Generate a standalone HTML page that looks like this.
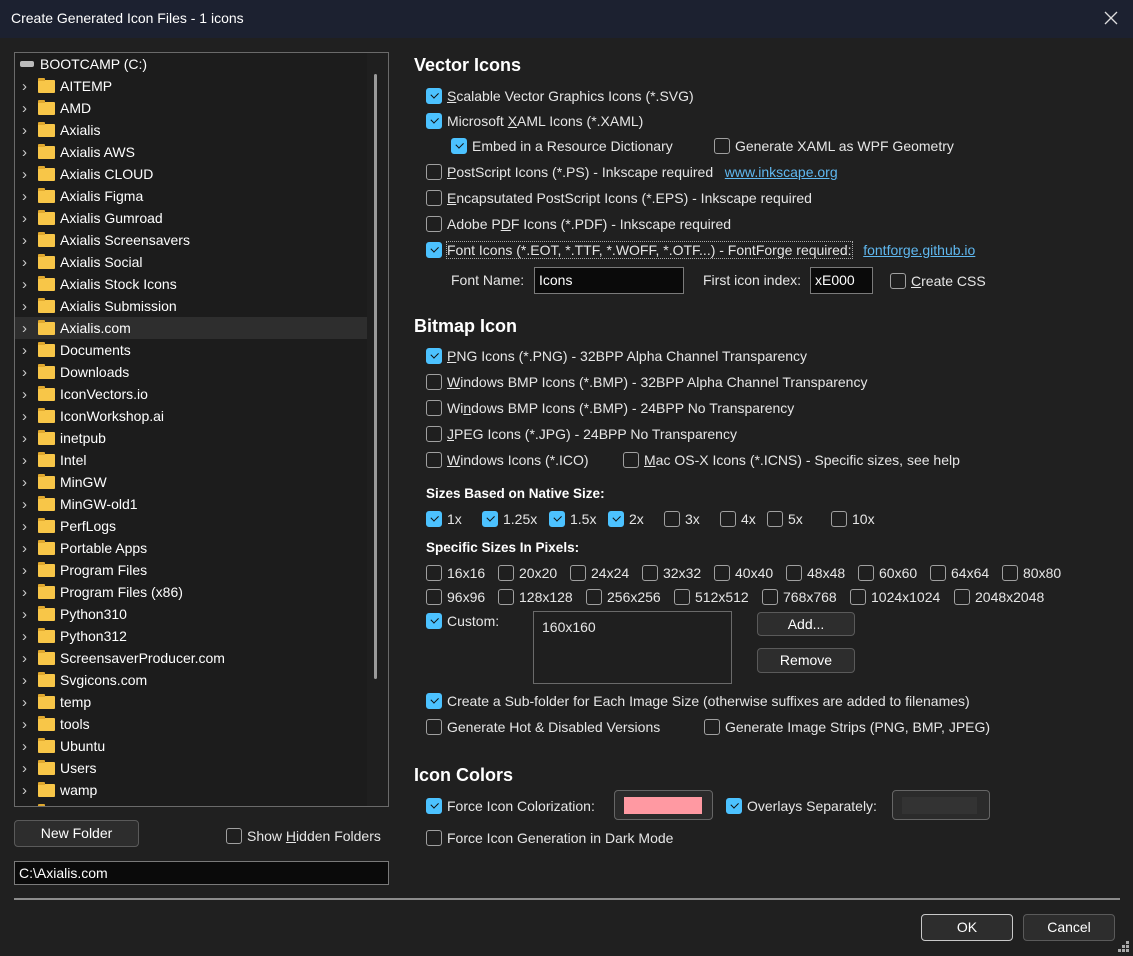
<!DOCTYPE html>
<html><head><meta charset="utf-8"><style>
*{box-sizing:border-box;margin:0;padding:0}
body{width:1133px;height:956px;background:#202020;font-family:"Liberation Sans",sans-serif;font-size:14px;color:#e6e6e6;position:relative;overflow:hidden}
.a{position:absolute;white-space:nowrap}
.title{left:0;top:0;width:1133px;height:38px;background:#1c2130}
.it{display:flex;align-items:center;height:18px;line-height:18px}
.cb{width:16px;height:16px;border:1px solid #a0a0a0;border-radius:3px;margin-right:5px;flex:none;position:relative;background:#1f1f1f}
.cb.c{background:#4cc2ff;border-color:#4cc2ff}
.cb.c:after{content:"";position:absolute;left:4px;top:3px;width:6px;height:3.5px;border-left:1.5px solid #111;border-bottom:1.5px solid #111;transform:rotate(-45deg)}
h2{position:absolute;font-size:18px;font-weight:bold;color:#fff}
.b{font-weight:bold;font-size:13.5px;color:#fff}
.btn{position:absolute;background:#2d2d2d;border:1px solid #5a5a5a;border-radius:4px;text-align:center;color:#fff;font-size:14px}
.inp{position:absolute;background:#0a0a0a;border:1px solid #7a7a7a;color:#fff;padding-left:4px;font-size:14px}
.tree{left:14px;top:52px;width:375px;height:755px;background:#1c1c1c;border:1px solid #6a6a6a;overflow:hidden}
.row{position:absolute;left:0;height:22px;width:352px;display:flex;align-items:center;font-size:14px;color:#fff}
.row .ch{width:23px;padding-left:7px;color:#ccc;font-size:15px;line-height:15px}
.fd{width:17px;height:13px;background:#f8c648;border-radius:1px;margin:0 5px 0 0;position:relative}
.fd:before{content:"";position:absolute;left:0;top:-2px;width:7px;height:3px;background:#e0a82e;border-radius:1px 1px 0 0}
u{text-decoration:underline}
a{color:#5fb8f0;text-decoration:underline}
</style></head><body>
<div class="a title"></div>
<div class="a" style="left:11px;top:10px;font-size:14px;color:#fff">Create Generated Icon Files - 1 icons</div>
<svg class="a" style="left:1104px;top:11px" width="14" height="14"><path d="M1 1L13 13M13 1L1 13" stroke="#ddd" stroke-width="1.3"/></svg>

<div class="a tree">
<div class="a" style="left:352px;top:0;width:21px;height:753px;background:#1f1f1f"></div>
<div class="a" style="left:359px;top:21px;width:3px;height:605px;background:#9a9a9a;border-radius:2px"></div>
<div class="row" style="top:0"><span style="width:5px"></span><span style="width:14px;height:6px;background:#bbb;border-radius:2px;margin-right:6px"></span>BOOTCAMP (C:)</div>
<div class="row" style="top:22px"><span class="ch">&#x203A;</span><span class="fd"></span>AITEMP</div>
<div class="row" style="top:44px"><span class="ch">&#x203A;</span><span class="fd"></span>AMD</div>
<div class="row" style="top:66px"><span class="ch">&#x203A;</span><span class="fd"></span>Axialis</div>
<div class="row" style="top:88px"><span class="ch">&#x203A;</span><span class="fd"></span>Axialis AWS</div>
<div class="row" style="top:110px"><span class="ch">&#x203A;</span><span class="fd"></span>Axialis CLOUD</div>
<div class="row" style="top:132px"><span class="ch">&#x203A;</span><span class="fd"></span>Axialis Figma</div>
<div class="row" style="top:154px"><span class="ch">&#x203A;</span><span class="fd"></span>Axialis Gumroad</div>
<div class="row" style="top:176px"><span class="ch">&#x203A;</span><span class="fd"></span>Axialis Screensavers</div>
<div class="row" style="top:198px"><span class="ch">&#x203A;</span><span class="fd"></span>Axialis Social</div>
<div class="row" style="top:220px"><span class="ch">&#x203A;</span><span class="fd"></span>Axialis Stock Icons</div>
<div class="row" style="top:242px"><span class="ch">&#x203A;</span><span class="fd"></span>Axialis Submission</div>
<div class="row" style="top:264px;background:#2e2e2e"><span class="ch">&#x203A;</span><span class="fd"></span>Axialis.com</div>
<div class="row" style="top:286px"><span class="ch">&#x203A;</span><span class="fd"></span>Documents</div>
<div class="row" style="top:308px"><span class="ch">&#x203A;</span><span class="fd"></span>Downloads</div>
<div class="row" style="top:330px"><span class="ch">&#x203A;</span><span class="fd"></span>IconVectors.io</div>
<div class="row" style="top:352px"><span class="ch">&#x203A;</span><span class="fd"></span>IconWorkshop.ai</div>
<div class="row" style="top:374px"><span class="ch">&#x203A;</span><span class="fd"></span>inetpub</div>
<div class="row" style="top:396px"><span class="ch">&#x203A;</span><span class="fd"></span>Intel</div>
<div class="row" style="top:418px"><span class="ch">&#x203A;</span><span class="fd"></span>MinGW</div>
<div class="row" style="top:440px"><span class="ch">&#x203A;</span><span class="fd"></span>MinGW-old1</div>
<div class="row" style="top:462px"><span class="ch">&#x203A;</span><span class="fd"></span>PerfLogs</div>
<div class="row" style="top:484px"><span class="ch">&#x203A;</span><span class="fd"></span>Portable Apps</div>
<div class="row" style="top:506px"><span class="ch">&#x203A;</span><span class="fd"></span>Program Files</div>
<div class="row" style="top:528px"><span class="ch">&#x203A;</span><span class="fd"></span>Program Files (x86)</div>
<div class="row" style="top:550px"><span class="ch">&#x203A;</span><span class="fd"></span>Python310</div>
<div class="row" style="top:572px"><span class="ch">&#x203A;</span><span class="fd"></span>Python312</div>
<div class="row" style="top:594px"><span class="ch">&#x203A;</span><span class="fd"></span>ScreensaverProducer.com</div>
<div class="row" style="top:616px"><span class="ch">&#x203A;</span><span class="fd"></span>Svgicons.com</div>
<div class="row" style="top:638px"><span class="ch">&#x203A;</span><span class="fd"></span>temp</div>
<div class="row" style="top:660px"><span class="ch">&#x203A;</span><span class="fd"></span>tools</div>
<div class="row" style="top:682px"><span class="ch">&#x203A;</span><span class="fd"></span>Ubuntu</div>
<div class="row" style="top:704px"><span class="ch">&#x203A;</span><span class="fd"></span>Users</div>
<div class="row" style="top:726px"><span class="ch">&#x203A;</span><span class="fd"></span>wamp</div>
<div class="row" style="top:748px"><span class="ch"></span><span class="fd"></span>x</div>
</div>

<div class="btn" style="left:14px;top:820px;width:125px;height:27px;line-height:25px">New Folder</div>
<div class="a it" style="left:226px;top:827px"><span class="cb"></span><span>Show <u>H</u>idden Folders</span></div>
<div class="inp" style="left:14px;top:861px;width:375px;height:24px;line-height:22px">C:\Axialis.com</div>

<h2 style="left:414px;top:55px">Vector Icons</h2>
<div class="a it" style="left:426px;top:87px"><span class="cb c"></span><span><u>S</u>calable Vector Graphics Icons (*.SVG)</span></div>
<div class="a it" style="left:426px;top:112px"><span class="cb c"></span><span>Microsoft <u>X</u>AML Icons (*.XAML)</span></div>
<div class="a it" style="left:451px;top:137px"><span class="cb c"></span><span>Embed in a Resource Dictionary</span></div>
<div class="a it" style="left:714px;top:137px"><span class="cb"></span><span>Generate XAML as WPF Geometry</span></div>
<div class="a it" style="left:426px;top:163px"><span class="cb"></span><span><u>P</u>ostScript Icons (*.PS) - Inkscape required&nbsp;&nbsp;&nbsp;<a>www.inkscape.org</a></span></div>
<div class="a it" style="left:426px;top:189px"><span class="cb"></span><span><u>E</u>ncapsutated PostScript Icons (*.EPS) - Inkscape required</span></div>
<div class="a it" style="left:426px;top:215px"><span class="cb"></span><span>Adobe P<u>D</u>F Icons (*.PDF) - Inkscape required</span></div>
<div class="a it" style="left:426px;top:241px"><span class="cb c"></span><span><span style="outline:1px dotted #aaa">Font Icons (*.EOT, *.TTF, *.WOFF, *.OTF...) - FontForge required:</span>&nbsp;&nbsp;&nbsp;<a>fontforge.github.io</a></span></div>
<div class="a" style="left:451px;top:272px;font-size:14px">Font Name:</div>
<div class="inp" style="left:534px;top:267px;width:150px;height:27px;line-height:25px">Icons</div>
<div class="a" style="left:703px;top:272px;font-size:14px">First icon index:</div>
<div class="inp" style="left:810px;top:267px;width:63px;height:27px;line-height:25px">xE000</div>
<div class="a it" style="left:890px;top:272px"><span class="cb"></span><span><u>C</u>reate CSS</span></div>

<h2 style="left:414px;top:316px">Bitmap Icon</h2>
<div class="a it" style="left:426px;top:347px"><span class="cb c"></span><span><u>P</u>NG Icons (*.PNG) - 32BPP Alpha Channel Transparency</span></div>
<div class="a it" style="left:426px;top:373px"><span class="cb"></span><span><u>W</u>indows BMP Icons (*.BMP) - 32BPP Alpha Channel Transparency</span></div>
<div class="a it" style="left:426px;top:399px"><span class="cb"></span><span>Wi<u>n</u>dows BMP Icons (*.BMP) - 24BPP No Transparency</span></div>
<div class="a it" style="left:426px;top:425px"><span class="cb"></span><span><u>J</u>PEG Icons (*.JPG) - 24BPP No Transparency</span></div>
<div class="a it" style="left:426px;top:451px"><span class="cb"></span><span><u>W</u>indows Icons (*.ICO)</span></div>
<div class="a it" style="left:623px;top:451px"><span class="cb"></span><span><u>M</u>ac OS-X Icons (*.ICNS) - Specific sizes, see help</span></div>

<div class="a b" style="left:426px;top:486px">Sizes Based on Native Size:</div>
<div class="a it" style="left:426px;top:510px"><span class="cb c"></span>1x</div>
<div class="a it" style="left:482px;top:510px"><span class="cb c"></span>1.25x</div>
<div class="a it" style="left:549px;top:510px"><span class="cb c"></span>1.5x</div>
<div class="a it" style="left:608px;top:510px"><span class="cb c"></span>2x</div>
<div class="a it" style="left:664px;top:510px"><span class="cb"></span>3x</div>
<div class="a it" style="left:720px;top:510px"><span class="cb"></span>4x</div>
<div class="a it" style="left:767px;top:510px"><span class="cb"></span>5x</div>
<div class="a it" style="left:831px;top:510px"><span class="cb"></span>10x</div>

<div class="a b" style="left:426px;top:540px">Specific Sizes In Pixels:</div>
<div class="a it" style="left:426px;top:564px"><span class="cb"></span>16x16</div>
<div class="a it" style="left:498px;top:564px"><span class="cb"></span>20x20</div>
<div class="a it" style="left:570px;top:564px"><span class="cb"></span>24x24</div>
<div class="a it" style="left:642px;top:564px"><span class="cb"></span>32x32</div>
<div class="a it" style="left:714px;top:564px"><span class="cb"></span>40x40</div>
<div class="a it" style="left:786px;top:564px"><span class="cb"></span>48x48</div>
<div class="a it" style="left:858px;top:564px"><span class="cb"></span>60x60</div>
<div class="a it" style="left:930px;top:564px"><span class="cb"></span>64x64</div>
<div class="a it" style="left:1002px;top:564px"><span class="cb"></span>80x80</div>
<div class="a it" style="left:426px;top:588px"><span class="cb"></span>96x96</div>
<div class="a it" style="left:498px;top:588px"><span class="cb"></span>128x128</div>
<div class="a it" style="left:586px;top:588px"><span class="cb"></span>256x256</div>
<div class="a it" style="left:674px;top:588px"><span class="cb"></span>512x512</div>
<div class="a it" style="left:762px;top:588px"><span class="cb"></span>768x768</div>
<div class="a it" style="left:850px;top:588px"><span class="cb"></span>1024x1024</div>
<div class="a it" style="left:954px;top:588px"><span class="cb"></span>2048x2048</div>

<div class="a it" style="left:426px;top:612px"><span class="cb c"></span>Custom:</div>
<div class="a" style="left:533px;top:611px;width:199px;height:73px;border:1px solid #6a6a6a;background:#1f1f1f;padding:7px 8px;font-size:14px">160x160</div>
<div class="btn" style="left:757px;top:612px;width:98px;height:24px;line-height:22px">Add...</div>
<div class="btn" style="left:757px;top:648px;width:98px;height:25px;line-height:23px">Remove</div>

<div class="a it" style="left:426px;top:692px"><span class="cb c"></span><span>Create a Sub-folder for Each Image Size (otherwise suffixes are added to filenames)</span></div>
<div class="a it" style="left:426px;top:718px"><span class="cb"></span><span>Generate Hot &amp; Disabled Versions</span></div>
<div class="a it" style="left:704px;top:718px"><span class="cb"></span><span>Generate Image Strips (PNG, BMP, JPEG)</span></div>

<h2 style="left:414px;top:765px">Icon Colors</h2>
<div class="a it" style="left:426px;top:797px"><span class="cb c"></span><span>Force Icon Colorization:</span></div>
<div class="a" style="left:614px;top:790px;width:99px;height:30px;border:1px solid #666;border-radius:4px;background:#2b2b2b"><div style="margin:6px 0 0 9px;width:78px;height:17px;background:#ff99a2"></div></div>
<div class="a it" style="left:726px;top:797px"><span class="cb c"></span><span>Overlays Separately:</span></div>
<div class="a" style="left:892px;top:790px;width:98px;height:30px;border:1px solid #666;border-radius:4px;background:#2b2b2b"><div style="margin:6px 0 0 9px;width:75px;height:17px;background:#333"></div></div>
<div class="a it" style="left:426px;top:829px"><span class="cb"></span><span>Force Icon Generation in Dark Mode</span></div>

<div class="a" style="left:14px;top:898px;width:1106px;height:2px;background:#8c8c8c"></div>
<div class="btn" style="left:921px;top:914px;width:92px;height:27px;line-height:25px;border-color:#c8c8c8">OK</div>
<div class="btn" style="left:1023px;top:914px;width:92px;height:27px;line-height:25px">Cancel</div>
<svg class="a" style="left:1118px;top:941px" width="12" height="12"><g fill="#aaa"><rect x="8" y="0" width="3" height="3"/><rect x="4" y="4" width="3" height="3"/><rect x="8" y="4" width="3" height="3"/><rect x="0" y="8" width="3" height="3"/><rect x="4" y="8" width="3" height="3"/><rect x="8" y="8" width="3" height="3"/></g></svg>
</body></html>
